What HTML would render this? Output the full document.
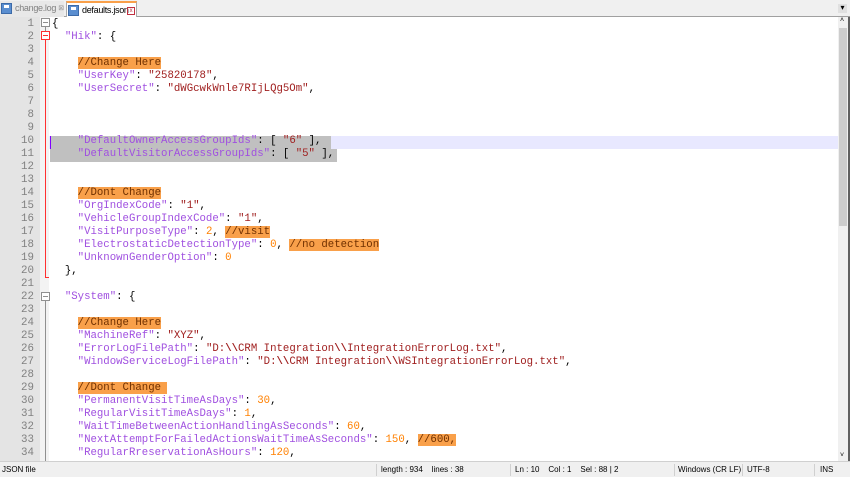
<!DOCTYPE html>
<html><head><meta charset="utf-8"><style>
*{margin:0;padding:0;box-sizing:border-box}
body{width:850px;height:477px;overflow:hidden;background:#f0f0f0;font-family:"Liberation Sans",sans-serif;position:relative}
.tabs{position:absolute;left:0;top:0;width:850px;height:17px;background:#f0f0f0;border-bottom:1px solid #a0a0a0}
.tab{position:absolute;top:1px;height:16px;font-size:9px;line-height:15px;padding-left:15px;letter-spacing:-0.3px;white-space:nowrap}
.tab .ic{position:absolute;left:1px;top:2px;width:11px;height:11px;background:#5a8ed0;border:1px solid #3c6aa8}
.tab .ic:after{content:"";position:absolute;left:2px;top:1px;width:5px;height:3px;background:#fff}
.x{position:absolute;top:4px;width:8px;height:8px;font-size:7px;line-height:7px;text-align:center}
.ed{position:absolute;left:0;top:17px;width:850px;height:444px;background:#fff;overflow:hidden}
.gut{position:absolute;left:0;top:0;width:40px;height:444px;background:#e4e4e4}
.fold{position:absolute;left:40px;top:0;width:9px;height:444px;background:#f3f3f3}
.ln{position:absolute;left:0;width:34px;text-align:right;font-family:"Liberation Mono",monospace;font-size:10.8px;color:#808080;height:13px;line-height:13px}
.t{position:absolute;left:52px;font-family:"Liberation Mono",monospace;font-size:10.7px;height:13px;line-height:13px;white-space:pre;color:#000}
.k{color:#a050e0}.s{color:#a02020}.n{color:#ff8000}.c{background:#f9a04a;color:#703000}
.sb{position:absolute;left:838px;top:0;width:12px;height:444px;background:#f0f0f0;border-right:2px solid #606060}
.th{position:absolute;left:1px;top:11px;width:8px;height:198px;background:#cdcdcd}
.st{position:absolute;left:0;top:461px;width:850px;height:16px;background:#f0f0f0;border-top:1px solid #d0d0d0;font-size:8px;line-height:15px;white-space:nowrap}
.st span{position:absolute;top:0}
.st i{position:absolute;top:2px;width:1px;height:12px;background:#d0d0d0}
</style></head><body>
<div class="tabs">
<div class="tab" style="left:0;width:64px;color:#808080;background:#e8e8e8"><span class="ic"></span>change.log<span class="x" style="left:57px;color:#999">⊠</span></div>
<div class="tab" style="left:66px;width:71px;background:#fff;border-top:2px solid #f9a04a;border-left:1px solid #aaa;border-right:1px solid #aaa;height:17px"><span class="ic"></span>defaults.json<span class="x" style="left:60px;color:#c03040;border:1px solid #c03040;font-size:6px">x</span></div>
<div style="position:absolute;left:838px;top:4px;width:9px;height:9px;background:#e0e0e0;font-size:8px;line-height:8px;text-align:center">▾</div>
</div>
<div class="ed">
<div class="gut"></div><div class="fold"></div>
<div style="position:absolute;left:49px;top:119px;width:789px;height:13px;background:#e8e8ff"></div>
<div style="position:absolute;left:50px;top:119px;width:281px;height:13px;background:#c0c0c0"></div>
<div style="position:absolute;left:50px;top:132px;width:287px;height:13px;background:#c0c0c0"></div>
<div style="position:absolute;left:50px;top:119px;width:1px;height:13px;background:#8000ff"></div>
<div style="position:absolute;left:45px;top:12px;width:1px;height:249px;background:#ff3030"></div>
<div style="position:absolute;left:45px;top:260px;width:4px;height:1px;background:#ff3030"></div>
<div style="position:absolute;left:41px;top:1px;width:9px;height:9px;border:1px solid #909090;background:#fff"><div style="position:absolute;left:1px;top:3px;width:5px;height:1px;background:#909090"></div></div>
<div style="position:absolute;left:45px;top:10px;width:1px;height:5px;background:#909090"></div>
<div style="position:absolute;left:41px;top:14px;width:9px;height:9px;border:1px solid #ff3030;background:#fff"><div style="position:absolute;left:1px;top:3px;width:5px;height:1px;background:#ff3030"></div></div>
<div style="position:absolute;left:41px;top:275px;width:9px;height:9px;border:1px solid #909090;background:#fff"><div style="position:absolute;left:1px;top:3px;width:5px;height:1px;background:#909090"></div></div>
<div style="position:absolute;left:45px;top:284px;width:1px;height:160px;background:#909090"></div>
<div class="sb"><div style="position:absolute;top:0;left:2px;font-size:7px">˄</div><div class="th"></div><div style="position:absolute;bottom:2px;left:2px;font-size:7px">˅</div></div>
</div>
<div id="L" style="position:absolute;left:0;top:17px;width:838px;height:444px;overflow:hidden"></div>
<div class="st">
<span style="left:2px">JSON file</span>
<i style="left:376px"></i><span style="left:381px">length : 934&nbsp;&nbsp;&nbsp; lines : 38</span>
<i style="left:510px"></i><span style="left:515px">Ln : 10&nbsp;&nbsp;&nbsp; Col : 1&nbsp;&nbsp;&nbsp; Sel : 88 | 2</span>
<i style="left:674px"></i><span style="left:678px">Windows (CR LF)</span>
<i style="left:742px"></i><span style="left:747px">UTF-8</span>
<i style="left:814px"></i><span style="left:820px">INS</span>
</div>
<script>
const q=s=>'<span class="k">"'+s+'"</span>';
const v=s=>'<span class="s">"'+s+'"</span>';
const n=s=>'<span class="n">'+s+'</span>';
const c=s=>'<span class="c">'+s+'</span>';
const I='    ';
const lines=[
'{',
'  '+q('Hik')+': {',
'',
I+c('//Change Here'),
I+q('UserKey')+': '+v('25820178')+',',
I+q('UserSecret')+': '+v('dWGcwkWnle7RIjLQg5Om')+',',
'','','',
I+q('DefaultOwnerAccessGroupIds')+': [ '+v('6')+' ],',
I+q('DefaultVisitorAccessGroupIds')+': [ '+v('5')+' ],',
'','',
I+c('//Dont Change'),
I+q('OrgIndexCode')+': '+v('1')+',',
I+q('VehicleGroupIndexCode')+': '+v('1')+',',
I+q('VisitPurposeType')+': '+n('2')+', '+c('//visit'),
I+q('ElectrostaticDetectionType')+': '+n('0')+', '+c('//no detection'),
I+q('UnknownGenderOption')+': '+n('0'),
'  },',
'',
'  '+q('System')+': {',
'',
I+c('//Change Here'),
I+q('MachineRef')+': '+v('XYZ')+',',
I+q('ErrorLogFilePath')+': '+v('D:<b>\\\\</b>CRM Integration<b>\\\\</b>IntegrationErrorLog.txt')+',',
I+q('WindowServiceLogFilePath')+': '+v('D:<b>\\\\</b>CRM Integration<b>\\\\</b>WSIntegrationErrorLog.txt')+',',
'',
I+c('//Dont Change '),
I+q('PermanentVisitTimeAsDays')+': '+n('30')+',',
I+q('RegularVisitTimeAsDays')+': '+n('1')+',',
I+q('WaitTimeBetweenActionHandlingAsSeconds')+': '+n('60')+',',
I+q('NextAttemptForFailedActionsWaitTimeAsSeconds')+': '+n('150')+', '+c('//600,'),
I+q('RegularRreservationAsHours')+': '+n('120')+','
];
let h='';
lines.forEach((l,i)=>{const y=i*13.03+0.5;h+='<div class="ln" style="top:'+y+'px">'+(i+1)+'</div><div class="t" style="top:'+y+'px">'+l+'</div>';});
document.getElementById('L').innerHTML=h;
</script>
</body></html>
